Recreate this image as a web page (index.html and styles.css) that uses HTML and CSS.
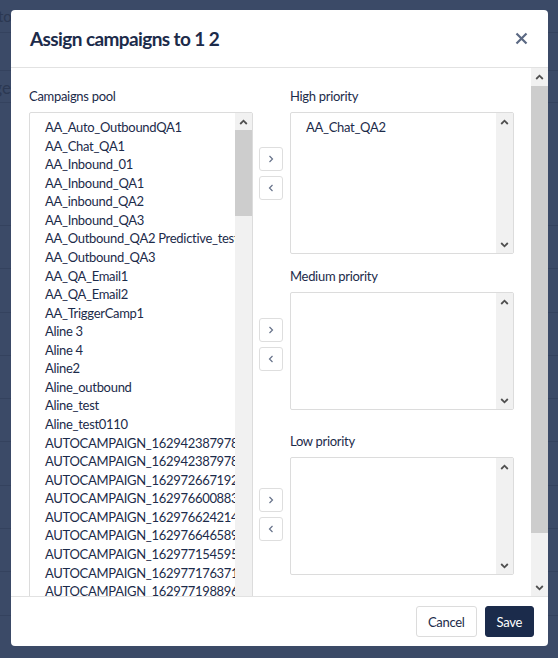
FILE: index.html
```html
<!DOCTYPE html>
<html lang="en">
<head>
<meta charset="utf-8">
<title>Assign campaigns</title>
<link rel="stylesheet" href="styles.css">
</head>
<body>
<div class="page">
  <div class="page-title">to be assigned campaigns of the agent list</div>
  <div class="page-toolbar"></div>
  <div class="table-head"><span class="table-head-text">Manage</span></div>
  <div class="table-row table-row-first"></div>
  <div class="table-row"></div>
  <div class="table-row"></div>
  <div class="table-row"></div>
  <div class="table-row"></div>
  <div class="table-row"></div>
  <div class="table-row"></div>
  <div class="table-row"></div>
  <div class="table-row"></div>
  <div class="table-row"></div>
  <div class="table-row"></div>
</div>

<div class="modal">
  <div class="modal-header">
    <h2 class="modal-title">Assign campaigns to 1 2</h2>
    <button class="close-btn" aria-label="Close">
      <svg width="13" height="13" viewBox="0 0 13 13"><path d="M1.5 1.5 L11.5 11.5 M11.5 1.5 L1.5 11.5" stroke="#5b6983" stroke-width="2.2" fill="none"/></svg>
    </button>
  </div>
  <div class="modal-body">
    <div class="modal-scroll">
      <div class="assign">
        <div class="pool-col">
          <div class="field-label">Campaigns pool</div>
          <div class="listbox pool-box">
            <div class="listbox-content">
              <ul class="items">
                <li>AA_Auto_OutboundQA1</li>
                <li>AA_Chat_QA1</li>
                <li>AA_Inbound_01</li>
                <li>AA_Inbound_QA1</li>
                <li>AA_inbound_QA2</li>
                <li>AA_Inbound_QA3</li>
                <li>AA_Outbound_QA2 Predictive_test</li>
                <li>AA_Outbound_QA3</li>
                <li>AA_QA_Email1</li>
                <li>AA_QA_Email2</li>
                <li>AA_TriggerCamp1</li>
                <li>Aline 3</li>
                <li>Aline 4</li>
                <li>Aline2</li>
                <li>Aline_outbound</li>
                <li>Aline_test</li>
                <li>Aline_test0110</li>
                <li>AUTOCAMPAIGN_1629423879781</li>
                <li>AUTOCAMPAIGN_1629423879789</li>
                <li>AUTOCAMPAIGN_1629726671925</li>
                <li>AUTOCAMPAIGN_1629766008834</li>
                <li>AUTOCAMPAIGN_1629766242144</li>
                <li>AUTOCAMPAIGN_1629766465891</li>
                <li>AUTOCAMPAIGN_1629771545952</li>
                <li>AUTOCAMPAIGN_1629771763713</li>
                <li>AUTOCAMPAIGN_1629771988961</li>
                <li>AUTOCAMPAIGN_1629772204417</li>
                <li>AUTOCAMPAIGN_1629772419632</li>
              </ul>
            </div>
            <div class="vscroll">
              <div class="vscroll-btn"><svg width="9" height="6" viewBox="0 0 9 6"><path d="M1.2 5 L4.5 1.7 L7.8 5" stroke="#505050" stroke-width="1.8" fill="none"/></svg></div>
              <div class="vscroll-thumb pool-thumb"></div>
              <div class="vscroll-track"></div>
              <div class="vscroll-btn"><svg width="9" height="6" viewBox="0 0 9 6"><path d="M1.2 1 L4.5 4.3 L7.8 1" stroke="#505050" stroke-width="1.8" fill="none"/></svg></div>
            </div>
          </div>
        </div>

        <div class="mover-col">
          <div class="mover-group group-high">
            <button class="mover-btn" aria-label="Add"><svg width="6" height="8" viewBox="0 0 6 8"><path d="M1.5 1 L4.5 4 L1.5 7" stroke="#66728a" stroke-width="1.2" fill="none"/></svg></button>
            <button class="mover-btn" aria-label="Remove"><svg width="6" height="8" viewBox="0 0 6 8"><path d="M4.5 1 L1.5 4 L4.5 7" stroke="#66728a" stroke-width="1.2" fill="none"/></svg></button>
          </div>
          <div class="mover-group group-medium">
            <button class="mover-btn" aria-label="Add"><svg width="6" height="8" viewBox="0 0 6 8"><path d="M1.5 1 L4.5 4 L1.5 7" stroke="#66728a" stroke-width="1.2" fill="none"/></svg></button>
            <button class="mover-btn" aria-label="Remove"><svg width="6" height="8" viewBox="0 0 6 8"><path d="M4.5 1 L1.5 4 L4.5 7" stroke="#66728a" stroke-width="1.2" fill="none"/></svg></button>
          </div>
          <div class="mover-group group-low">
            <button class="mover-btn" aria-label="Add"><svg width="6" height="8" viewBox="0 0 6 8"><path d="M1.5 1 L4.5 4 L1.5 7" stroke="#66728a" stroke-width="1.2" fill="none"/></svg></button>
            <button class="mover-btn" aria-label="Remove"><svg width="6" height="8" viewBox="0 0 6 8"><path d="M4.5 1 L1.5 4 L4.5 7" stroke="#66728a" stroke-width="1.2" fill="none"/></svg></button>
          </div>
        </div>

        <div class="prio-col">
          <div class="field-label">High priority</div>
          <div class="listbox prio-box prio-high">
            <div class="listbox-content">
              <ul class="items">
                <li>AA_Chat_QA2</li>
              </ul>
            </div>
            <div class="vscroll">
              <div class="vscroll-btn"><svg width="9" height="6" viewBox="0 0 9 6"><path d="M1.2 5 L4.5 1.7 L7.8 5" stroke="#505050" stroke-width="1.8" fill="none"/></svg></div>
              <div class="vscroll-track"></div>
              <div class="vscroll-btn"><svg width="9" height="6" viewBox="0 0 9 6"><path d="M1.2 1 L4.5 4.3 L7.8 1" stroke="#505050" stroke-width="1.8" fill="none"/></svg></div>
            </div>
          </div>
          <div class="field-label label-medium">Medium priority</div>
          <div class="listbox prio-box prio-medium">
            <div class="listbox-content">
              <ul class="items"></ul>
            </div>
            <div class="vscroll">
              <div class="vscroll-btn"><svg width="9" height="6" viewBox="0 0 9 6"><path d="M1.2 5 L4.5 1.7 L7.8 5" stroke="#505050" stroke-width="1.8" fill="none"/></svg></div>
              <div class="vscroll-track"></div>
              <div class="vscroll-btn"><svg width="9" height="6" viewBox="0 0 9 6"><path d="M1.2 1 L4.5 4.3 L7.8 1" stroke="#505050" stroke-width="1.8" fill="none"/></svg></div>
            </div>
          </div>
          <div class="field-label label-low">Low priority</div>
          <div class="listbox prio-box prio-low">
            <div class="listbox-content">
              <ul class="items"></ul>
            </div>
            <div class="vscroll">
              <div class="vscroll-btn"><svg width="9" height="6" viewBox="0 0 9 6"><path d="M1.2 5 L4.5 1.7 L7.8 5" stroke="#505050" stroke-width="1.8" fill="none"/></svg></div>
              <div class="vscroll-track"></div>
              <div class="vscroll-btn"><svg width="9" height="6" viewBox="0 0 9 6"><path d="M1.2 1 L4.5 4.3 L7.8 1" stroke="#505050" stroke-width="1.8" fill="none"/></svg></div>
            </div>
          </div>
        </div>
      </div>
    </div>
    <div class="vscroll body-scroll">
      <div class="vscroll-btn"><svg width="9" height="6" viewBox="0 0 9 6"><path d="M1.2 5 L4.5 1.7 L7.8 5" stroke="#505050" stroke-width="1.8" fill="none"/></svg></div>
      <div class="vscroll-thumb body-thumb"></div>
      <div class="vscroll-track"></div>
      <div class="vscroll-btn"><svg width="9" height="6" viewBox="0 0 9 6"><path d="M1.2 1 L4.5 4.3 L7.8 1" stroke="#505050" stroke-width="1.8" fill="none"/></svg></div>
    </div>
  </div>
  <div class="modal-footer">
    <button class="btn btn-cancel">Cancel</button>
    <button class="btn btn-save">Save</button>
  </div>
</div>
</body>
</html>
```

FILE: styles.css
```css
* {
  box-sizing: border-box;
}

html,
body {
  margin: 0;
  height: 100%;
}

body {
  position: relative;
  overflow: hidden;
  background: #3b4a67;
  font-family: Lato, "Open Sans", sans-serif;
  color: #1c2b4a;
}

/* dimmed page behind the dialog */
.page {
  color: #2b3852;
}

.page-title {
  height: 33px;
  margin-left: -2px;
  border-bottom: 1px solid #34425e;
  font-size: 15px;
  line-height: 32px;
  white-space: nowrap;
}

.page-toolbar {
  height: 38px;
  border-bottom: 1px solid #34425e;
}

.table-head {
  height: 32px;
  border-bottom: 1px solid #34425e;
  font-size: 17px;
  line-height: 34px;
  white-space: nowrap;
}

.table-head-text {
  display: block;
  width: 11px;
  overflow: hidden;
  direction: rtl;
  text-align: left;
}

.table-row {
  height: 43.3px;
  border-bottom: 1px solid #34425e;
}

.table-row-first {
  height: 123px;
}

/* dialog */
.modal {
  position: absolute;
  left: 11px;
  top: 10px;
  width: 537px;
  height: 636px;
  display: flex;
  flex-direction: column;
  background: #fff;
  border-radius: 4px;
  overflow: hidden;
}

.modal-header {
  flex: none;
  height: 58px;
  padding: 0 20px 0 19px;
  display: flex;
  align-items: center;
  justify-content: space-between;
  border-bottom: 1px solid #e2e2e2;
}

.modal-title {
  margin: 0;
  font-size: 19px;
  font-weight: 700;
  letter-spacing: -0.6px;
  color: #1c2b4a;
}

.close-btn {
  width: 14px;
  height: 14px;
  padding: 0;
  border: 0;
  background: none;
  display: flex;
  align-items: center;
  justify-content: center;
}

.modal-body {
  flex: 1;
  min-height: 0;
  display: flex;
}

.modal-scroll {
  flex: 1;
  min-width: 0;
  overflow: hidden;
  padding: 20px 17px 15px 18px;
}

/* scrollbars */
.vscroll {
  flex: none;
  width: 17px;
  display: flex;
  flex-direction: column;
  background: #f1f1f1;
}

.vscroll-btn {
  flex: none;
  height: 17px;
  display: flex;
  align-items: center;
  justify-content: center;
}

.vscroll-thumb {
  flex: none;
  background: #cdcdcd;
}

.vscroll-track {
  flex: 1;
}

.body-thumb {
  margin-top: 1px;
  height: 447px;
}

.pool-thumb {
  height: 86px;
}

.assign {
  display: flex;
  align-items: flex-start;
}

.field-label {
  height: 16px;
  margin-bottom: 8px;
  font-size: 13px;
  line-height: 16px;
  letter-spacing: -0.3px;
  white-space: nowrap;
  color: #1c2b4a;
}

.listbox {
  width: 224px;
  display: flex;
  border: 1px solid #dcdcdc;
  border-radius: 2px;
  background: #fff;
  overflow: hidden;
}

.listbox-content {
  flex: 1;
  min-width: 0;
  overflow: hidden;
}

.pool-box {
  height: 526px;
}

.items {
  list-style: none;
  margin: 0;
  padding: 5px 0 5px 15px;
}

.items li {
  font-size: 13px;
  line-height: 18.57px;
  letter-spacing: -0.3px;
  white-space: nowrap;
  color: #1c2b4a;
}

.mover-col {
  width: 24px;
  margin: 0 7px 0 6px;
  padding-top: 59px;
  display: flex;
  flex-direction: column;
}

.mover-group {
  display: flex;
  flex-direction: column;
  gap: 5px;
}

.group-medium {
  margin-top: 118px;
}

.group-low {
  margin-top: 117px;
}

.mover-btn {
  width: 24px;
  height: 24px;
  padding: 0;
  border: 1px solid #dedede;
  border-radius: 3px;
  background: #fff;
  display: flex;
  align-items: center;
  justify-content: center;
}

.prio-col {
  width: 224px;
}

.prio-high {
  height: 142px;
}

.prio-medium,
.prio-low {
  height: 118px;
}

.label-medium {
  margin-top: 14px;
}

.label-low {
  margin-top: 23px;
}

.modal-footer {
  flex: none;
  height: 50px;
  padding: 0 14px;
  display: flex;
  align-items: center;
  justify-content: flex-end;
  gap: 8px;
  border-top: 1px solid #e2e2e2;
}

.btn {
  height: 31px;
  padding: 0 11px;
  border-radius: 3px;
  font-family: Lato, "Open Sans", sans-serif;
  font-size: 13px;
  letter-spacing: -0.3px;
}

.btn-cancel {
  border: 1px solid #dcdcdc;
  background: #fff;
  color: #1c2b4a;
}

.btn-save {
  border: 1px solid #1b2b4b;
  background: #1b2b4b;
  color: #fff;
}
```
